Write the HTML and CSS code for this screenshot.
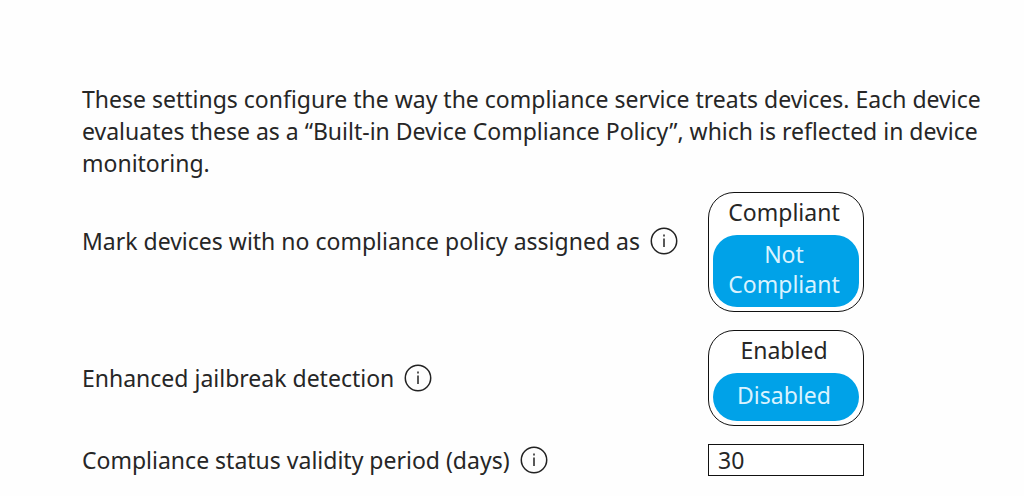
FILE: index.html
```
<!DOCTYPE html>
<html lang="en">
<head>
    <meta charset="UTF-8">
    <title>Compliance policy settings</title>
    <link rel="stylesheet" href="styles.css">
</head>
<body>
    <main class="settings">
        <p class="intro">These settings configure the way the compliance service treats devices. Each device<br>
        evaluates these as a “Built-in Device Compliance Policy”, which is reflected in device<br>
        monitoring.</p>

        <div class="row tall">
            <div class="name">
                <span id="mark">Mark devices with no compliance policy assigned as</span>
                <svg class="info" viewBox="0 0 28 28"><circle cx="14" cy="14" r="12.7"/><path d="M14 11.5v8.5M14 7.5v2"/></svg>
            </div>
            <div class="toggle" role="group" aria-labelledby="mark">
                <button type="button">Compliant</button>
                <button type="button" class="on">Not Compliant</button>
            </div>
        </div>

        <div class="row">
            <div class="name">
                <span id="jail">Enhanced jailbreak detection</span>
                <svg class="info" viewBox="0 0 28 28"><circle cx="14" cy="14" r="12.7"/><path d="M14 11.5v8.5M14 7.5v2"/></svg>
            </div>
            <div class="toggle" role="group" aria-labelledby="jail">
                <button type="button">Enabled</button>
                <button type="button" class="on">Disabled</button>
            </div>
        </div>

        <div class="row">
            <div class="name">
                <label for="days">Compliance status validity period (days)</label>
                <svg class="info" viewBox="0 0 28 28"><circle cx="14" cy="14" r="12.7"/><path d="M14 11.5v8.5M14 7.5v2"/></svg>
            </div>
            <input type="text" id="days" class="days" value="30">
        </div>
    </main>
</body>
</html>
```
FILE: styles.css
```
body {
    margin: 0;
    background-color: #fefefe;
    color: #262626;
    font-family: "Noto Sans", "Open Sans", sans-serif;
    font-size: 23px;
    line-height: 32px;
}
.settings {
    padding: 83px 16px 20px 82px;
}
.intro {
    margin: 0 0 13px;
    white-space: nowrap;
}
.row {
    display: grid;
    grid-template-columns: 626px 156px;
    align-items: center;
    margin-bottom: 18px;
}
.name {
    display: flex;
    align-items: center;
    gap: 10px;
    white-space: nowrap;
}
.tall .name {
    padding-bottom: 22px;
}
.info {
    width: 28px;
    height: 28px;
    flex-shrink: 0;
    fill: none;
    stroke: #222;
    stroke-width: 1.5;
}
.toggle {
    box-sizing: border-box;
    padding: 4px;
    border: 1px solid #111;
    border-radius: 26px;
    background-color: #fff;
}
.toggle button {
    display: block;
    width: 100%;
    margin: 0;
    padding: 0 12px 0 8px;
    border: none;
    background: none;
    color: #262626;
    font: inherit;
    line-height: 30px;
    cursor: pointer;
}
.toggle .on {
    min-height: 48px;
    margin-top: 8px;
    padding-top: 4px;
    padding-bottom: 8px;
    border-radius: 24px;
    background-color: #00a2e8;
    color: #d9f3ff;
}
.days {
    box-sizing: border-box;
    width: 100%;
    height: 32px;
    padding: 0 9px;
    border: 1px solid #111;
    border-radius: 0;
    background-color: #fff;
    color: #262626;
    font: inherit;
}
```
